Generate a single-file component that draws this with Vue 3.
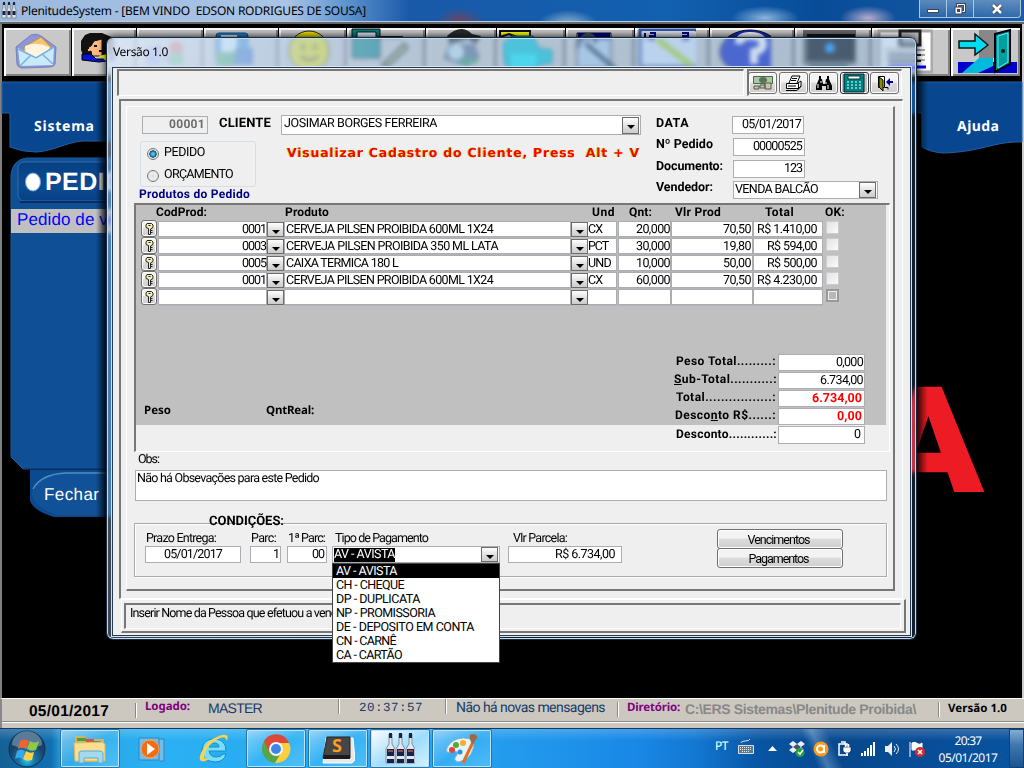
<script setup>
// Spreads the letters of a label so that it takes up the given width.
const vFit = {
  mounted(el, { value }) {
    const range = document.createRange()
    range.selectNodeContents(el)
    const width = range.getBoundingClientRect().width
    el.style.letterSpacing = (value - width) / el.textContent.length + 'px'
  }
}
const products = [
  ['0001', 'CERVEJA PILSEN PROIBIDA 600ML 1X24', 207, 'CX', 14, '20,000', '70,50', 'R$ 1.410,00', 60],
  ['0003', 'CERVEJA PILSEN PROIBIDA 350 ML LATA', 212, 'PCT', 20, '30,000', '19,80', 'R$ 594,00', 50],
  ['0005', 'CAIXA TERMICA 180 L', 112, 'UND', 23, '10,000', '50,00', 'R$ 500,00', 50],
  ['0001', 'CERVEJA PILSEN PROIBIDA 600ML 1X24', 207, 'CX', 14, '60,000', '70,50', 'R$ 4.230,00', 60],
  ['', '', 0, '', 0, '', '', '', 0]
]
const options = [
  ['AV - AVISTA', 61], ['CH - CHEQUE', 68], ['DP - DUPLICATA', 84], ['NP - PROMISSORIA', 99],
  ['DE - DEPOSITO EM CONTA', 138], ['CN - CARNÊ', 60], ['CA - CARTÃO', 66]
]
const tools = [
  ['mail', 68], ['people', 65], ['chart', 67], ['save', 75], ['smile', 68], ['calc', 79], ['phone', 71],
  ['car', 69], ['pen', 69], ['calendar', 75], ['help', 85], ['screen', 77], ['doc', 79], ['exit', 70]
]
</script>

<template>
  <div class="desktop">
    <header class="titlebar">
      <svg class="appicon" width="16" height="20" viewBox="0 0 16 20"><g v-for="x in [0, 5, 10]" :key="x" :transform="`translate(${x} 0)`"><path d="M2 3h2v5l1 2v8H1v-8l1-2z" fill="#dce6ee" stroke="#555" stroke-width=".5"/><path d="M2 2h2v3H2zM1.500 11h3v4h-3z" fill="#17213f"/></g></svg>
      <span class="ui t12" v-fit="345">PlenitudeSystem - [BEM VINDO&nbsp; EDSON RODRIGUES DE SOUSA]</span>
      <div class="winbtns">
        <span><svg width="14" height="12"><rect x="1.500" y="6.500" width="11" height="3" fill="#fff" stroke="#445"/></svg></span>
        <span><svg width="14" height="12"><path d="M4.500 1.500h7v7h-7z" fill="none" stroke="#445" stroke-width="3"/><path d="M4.500 1.500h7v7h-7z" fill="none" stroke="#fff"/><path d="M2 4h7v7H2z" fill="#fff" stroke="#445"/><rect x="4" y="6" width="3" height="3" fill="#445"/></svg></span>
        <span><svg width="14" height="12"><path d="M3 2l8 8M11 2l-8 8" stroke="#445" stroke-width="4.500"/><path d="M3 2l8 8M11 2l-8 8" stroke="#fff" stroke-width="2.600"/></svg></span>
      </div>
    </header>

    <main class="workspace">
      <nav class="tools">
        <div v-for="[name, w] in tools" :key="name" class="tool" :style="{ width: w + 'px' }">
          <svg width="64" height="48" viewBox="0 0 64 48">
            <g v-if="name === 'mail'"><path d="M12 19L27 7q6-2 10 1l15 11-1 17q-1 3-5 3l-28 1q-5-1-5-4z" fill="#8b97d6" stroke="#7580be"/><path d="M20 19l17-10 10 10 1 12H20z" fill="#f4c472" stroke="#c68b42"/><path d="M21 18q12-5 24 1l2 10H22z" fill="#fff5de"/><path d="M14 20l18 9 18-10-1 18-33 1z" fill="#c7ebfa"/><path d="M14 21l18 9 18-11M16 38l11-11M49 36L38 26" fill="none" stroke="#7daee0" stroke-width="1.500"/></g>
            <g v-else-if="name === 'people'"><path d="M14 27l-2-5V13l4-6 5-2h12l12 5v17z" fill="#111"/><path d="M25 13l8-2v17H23l-1-5-3 1-1-4 4-2z" fill="#ffb982" stroke="#111"/><path d="M13 26h9l5 5h13l5-6v7l-15 2-17-2z" fill="#0712d2" stroke="#000"/><path d="M29 28l5 2 5 5v-9z" fill="#ff0"/><path d="M25 18h3m2 5h3M15 20h5" stroke="#111" stroke-width="2"/></g>
            <g v-else-if="name === 'chart'"><rect x="12" y="18" width="14" height="20" fill="#8b9de0"/><circle cx="42" cy="20" r="7" fill="#df543f"/><rect x="35" y="25" width="14" height="12" fill="#4bb367"/><path d="M16 34l9-16 10 16" fill="none" stroke="#8b86db" stroke-width="3"/></g>
            <g v-else-if="name === 'save'"><rect x="15" y="5" width="32" height="30" rx="3" fill="#1d83d4" stroke="#1c497d"/><path d="M20 7h16v17H20z" fill="#e1f6ff"/><path d="M15 24h19v14H15z" fill="#38a158"/><path d="M34 20h18v17H34z" fill="#2865be"/></g>
            <g v-else-if="name === 'smile'"><circle cx="33" cy="23" r="20" fill="#eee000" stroke="#222"/><path d="M27 16v6m12-6v6M25 28q8 8 17 0" stroke="#6f7400" stroke-width="3" fill="none"/></g>
            <g v-else-if="name === 'calc'"><path d="M8 1h28v29H8z" fill="#008080" stroke="#111"/><path d="M13 4h19v6H13z" fill="#def" stroke="#111"/><path d="M38 37L60 16l5 3-21 19zM34 9h25" fill="#b8c874" stroke="#17232d" stroke-width="2"/></g>
            <g v-else-if="name === 'phone'"><path d="M24 8Q38-5 49 6l9 2-5 8-8-5-18 5z" fill="#282b2e"/><path d="M26 16h26l5 14-13 9-24-8z" fill="#5a7595"/><circle cx="33" cy="24" r="8" fill="#c2e2f2"/><path d="M36 33h18" stroke="#32a365" stroke-width="5"/></g>
            <g v-else-if="name === 'car'"><path d="M6 3h30v6H23l-8-3-9 3z" fill="#ff0" stroke="#111" stroke-width="2"/><path d="M9 15l9-7h21l6 12 13 2v13l-12 2-4 5H14l-4-8z" fill="#00c9db" stroke="#078"/><path d="M17 26h25v14H17z" fill="#0ef"/></g>
            <g v-else-if="name === 'pen'"><path d="M14 5h34v35H14z" fill="#b5d2ed" stroke="#111"/><path d="M15 5h32v6H15z" fill="#00008c"/><path d="M23 13l27 23 6 6-5 1L22 18z" fill="#263c5b"/><path d="M14 20q4-12 10-13 7-1 9 8" fill="none" stroke="#456" stroke-width="4"/></g>
            <g v-else-if="name === 'calendar'"><path d="M8 2h58v37H8z" fill="#dceafe" stroke="#3159b2" stroke-width="3"/><path d="M10 3h53v8H10z" fill="#dce1e9"/><path d="M13 5v6m5-6h5v3h-5v3h5M50 5h6v6h-6m0-3h6" fill="none" stroke="#00008b" stroke-width="2"/><path d="M26 12l34 26" stroke="#b6d93a" stroke-width="6"/></g>
            <g v-else-if="name === 'help'"><ellipse cx="43" cy="24" rx="30" ry="22" fill="#1428c8" stroke="#111"/><path d="M32 16q0-8 11-8 13 0 13 8 0 6-9 8v5M43 32h8" fill="none" stroke="#fff" stroke-width="8"/></g>
            <g v-else-if="name === 'screen'"><path d="M13 4h52v31H13z" fill="#15171b" stroke="#666" stroke-width="4"/><circle cx="38" cy="20" r="5" fill="#1395ff"/><path d="M17 39h39" stroke="#456" stroke-width="4"/></g>
            <g v-else-if="name === 'doc'"><path d="M10 3h53v41H10z" fill="#fff" stroke="#aaa" stroke-width="3"/><path d="M31 3h20v14H31z" fill="#bbb" stroke="#222" stroke-width="3"/><path d="M16 22h40M16 27h40M16 32h40" stroke="#aaa" stroke-width="2"/><path d="M20 27h32m-32 6h32" stroke="#222" stroke-width="2"/><path d="M19 39h38" stroke="#00f" stroke-width="3"/></g>
            <g v-else><path d="M26 2h18v28H26z" fill="#888"/><path d="M5 34h59v11H5z" fill="#00c"/><path d="M26 30h14v8L25 45H9z" fill="#0bd"/><path d="M42 6l15-4v34l-15 8z" fill="#008b8b" stroke="#001" stroke-width="2"/><path d="M45 8l10-3v29l-10 6z" fill="#009f9f" stroke="#6ef"/><path d="M6 13h16V6l13 11-13 10v-7H6z" fill="#00dcf0" stroke="#111" stroke-width="1.500"/><circle cx="50" cy="23" r="2" fill="#022"/></g>
          </svg>
        </div>
      </nav>
      <svg class="backdrop" width="1024" height="620" viewBox="0 78 1024 620">
        <defs><linearGradient id="b" x2="0" y2="1"><stop stop-color="#063f83"/><stop offset=".6" stop-color="#0d4b91"/><stop offset="1" stop-color="#064087"/></linearGradient>
          <linearGradient id="sh"><stop stop-color="#000" stop-opacity="0"/><stop offset="1" stop-color="#000" stop-opacity=".65"/></linearGradient></defs>
        <path d="M2 82H140V141H82C64 143 54 151 36 152Q22 152 10 147V113H2zM880 82H1022V142C994 141 982 152 943 153Q930 152 922 147V113H880z" fill="#08478f" stroke="#245e9f"/>
        <text x="34" y="131" textLength="60" class="tahoma">Sistema</text><text x="957" y="131" textLength="42" class="tahoma">Ajuda</text>
        <path d="M11 174Q13 160 26 158H150V469H23L11 457z" fill="#0e4f96" stroke="#1e5b9c"/>
        <rect x="18" y="162" width="140" height="39" rx="6" fill="url(#b)" stroke="#326ca9"/><path d="M20 202h120" stroke="#062e62" stroke-width="2"/>
        <ellipse cx="33" cy="182" rx="7.500" ry="9" fill="#fff" stroke="#6fa3d8"/><text x="45" y="190" textLength="98" font-family="Liberation Sans,sans-serif" font-weight="bold" font-size="25" fill="#fff">PEDIDO</text>
        <path d="M11 209h130v24H11z" fill="#c0c0c0"/><text x="17" y="225" textLength="129" font-family="Liberation Sans,sans-serif" font-size="17" fill="#00f">Pedido de venda</text>
        <path d="M30 470H150v47H54Q34 511 30 501z" fill="#0b4a91"/><path d="M31 493Q36 473 66 473H150v43H58Q32 508 31 493z" fill="#115197" stroke="#164476"/><path d="M33 489Q41 474 66 473H106" fill="none" stroke="#4d91c5" stroke-width="1.500"/>
        <path d="M23 469H106" stroke="#052d60"/><text x="44" y="500" textLength="55" font-family="Liberation Sans,sans-serif" font-size="17" fill="#fff">Fechar</text>
        <text x="873" y="491.500" textLength="111" lengthAdjust="spacingAndGlyphs" font-family="Roboto,sans-serif" font-weight="900" font-size="148" fill="#ed1c24">A</text>
        <rect x="96" y="82" width="10" height="553" fill="url(#sh)"/><rect x="916" y="80" width="12" height="560" fill="url(#sh)" transform="rotate(180 922 360)"/>
      </svg>
    </main>

    <footer class="status">
      <b class="date" v-fit="80">05/01/2017</b><i class="sep"></i><b class="purple" v-fit="45">Logado:</b>
      <span class="navy master" v-fit="54">MASTER</span><i class="sep s2"></i><span class="clock" v-fit="64">20:37:57</span><i class="sep s3"></i>
      <span class="navy msg" v-fit="149">Não há novas mensagens</span><i class="sep s4"></i><b class="purple dir" v-fit="53">Diretório:</b>
      <span class="path" v-fit="231">C:\ERS Sistemas\Plenitude Proibida\</span><i class="sep s5"></i><b class="ver" v-fit="59">Versão 1.0</b>
    </footer>

    <footer class="taskbar">
      <div class="start"><svg width="40" height="40" viewBox="0 0 40 40"><defs><radialGradient id="orb" cy=".8"><stop stop-color="#24d4f7"/><stop offset=".45" stop-color="#1772a7"/><stop offset="1" stop-color="#174365"/></radialGradient></defs><circle cx="20" cy="20" r="18" fill="url(#orb)" stroke="#12314e"/><path d="M5 16a15 14 0 0130 0q-15 7-30 0" fill="#d2e7f5" opacity=".35"/><path d="M13 12q5-3 9 0l-3 8q-4-3-8 0z" fill="#ef642c"/><path d="M23 12q4 3 9 0l-3 9q-5 2-9-1z" fill="#91c848"/><path d="M10 22q4-3 8 0l-2 8q-4-3-8 0z" fill="#35a7ea"/><path d="M19 22q4 3 8 1l-2 8q-5 2-9-1z" fill="#ffd246"/></svg></div>
      <div class="task open"><svg width="36" height="32" viewBox="0 0 36 32"><path d="M3 3h10l2 3h17v23H3z" fill="#d6b35b"/><path d="M5 5h9v3H5z" fill="#38a648"/><path d="M14 6h8v3h-8z" fill="#db5237"/><path d="M21 8h8v3h-8z" fill="#2f78ce"/><path d="M2 10l28-1 3 2v17H3z" fill="#f6df93" stroke="#d8b964"/><path d="M7 30V20q0-2 3-2h17q4 0 4 2v10h-5v-5H12v5z" fill="#a4d9ee" stroke="#5baed1"/></svg></div>
      <div class="task"><svg width="30" height="28" viewBox="0 0 30 28"><path d="M2 3h20v22H2zM22 4h5v22h-5" fill="#72bce9" stroke="#3684bd"/><circle cx="13" cy="14" r="9" fill="#f36b13" stroke="#ffa34d"/><path d="M10 8l8 6-8 6z" fill="#fff"/></svg></div>
      <div class="task"><svg width="36" height="34" viewBox="0 0 36 34"><path d="M30 19H13q1 6 7 6 5 0 7-3h3q-2 8-11 8Q6 29 6 18 7 7 18 7q12 0 12 12zM13 15h10q0-4-5-4t-5 4" fill="#7bddf7" stroke="#168dc7" fill-rule="evenodd"/><path d="M31 9Q34 0 23 4 11 8 5 21 1 31 9 29q3-1 5-3-6 2-6-2 0-5 7-12 14-12 16-3z" fill="#ffd34d"/></svg></div>
      <div class="task open w"><svg width="32" height="32" viewBox="0 0 32 32"><circle cx="16" cy="16" r="14" fill="#57a546"/><path d="M4 8A14 14 0 0129 10H16L10 20z" fill="#dc4938"/><path d="M29 10A14 14 0 0115 30l7-12q2-4-3-8z" fill="#fdcf3d"/><circle cx="16" cy="16" r="7" fill="#f3f6fa"/><circle cx="16" cy="16" r="5" fill="#4085e7"/></svg></div>
      <div class="task open"><svg width="34" height="32" viewBox="0 0 34 32"><path d="M5 5h27l2 22-3 3H2z" fill="#e8e8e6" stroke="#fff"/><path d="M6 4h23v21H2z" fill="#464646" stroke="#242424"/><path d="M3 22h26v4H2z" fill="#1b1b1b"/><text x="11" y="19" font-family="Open Sans,sans-serif" font-weight="700" font-size="18" fill="#ff9a22">S</text></svg></div>
      <div class="task open lit"><svg width="30" height="32" viewBox="0 0 30 32"><g v-for="x in [0, 10, 20]" :key="x" :transform="`translate(${x} 0)`"><path d="M4 1h3v10l3 5v14H1V16l3-5z" fill="#e1e8ee" stroke="#8090a0"/><path d="M4 0h3v5H4zM2 16h7v7H2zM2 26h7v4H2z" fill="#15224b"/><path d="M3 18h5" stroke="#fa7c6c"/></g></svg></div>
      <div class="task open"><svg width="36" height="34" viewBox="0 0 36 34"><path d="M14 30Q8 28 13 23q2-5-5-3Q1 22 3 16 7 7 19 6q14 0 10 11Q26 28 14 30z" fill="#e5f4fa" stroke="#8fb5c6"/><circle cx="8" cy="18" r="3" fill="#e44635"/><circle cx="12" cy="13" r="3" fill="#58a53c"/><circle cx="19" cy="11" r="3" fill="#f8ad28"/><circle cx="16" cy="20" r="2.500" fill="#2793dc"/><path d="M19 31l10-21" stroke="#de7222" stroke-width="3"/><path d="M27 10q-3-8 1-8 6 0 5 4l-4 6z" fill="#9b6b41"/></svg></div>
      <div class="tray">
        <span class="pt" v-fit="13">PT</span>
        <svg class="kb" width="16" height="15" viewBox="0 0 16 15"><path d="M.5 6.500h15v8H.5z" fill="#5d7891" stroke="#ddd"/><path d="M3 4q0-2 4-2t5-2" fill="none" stroke="#ddd"/><path d="M2 8.500h12M2 10.500h12M4 12.500h8" stroke="#eee" stroke-dasharray="1 1"/></svg>
        <svg class="up" width="9" height="5"><path d="M0 5L4.500 0 9 5z" fill="#fff"/></svg>
        <svg class="ic" width="16" height="16" viewBox="0 0 16 16"><path d="M0 3l4-3 4 3 4-3 4 3-4 3 3 3-4 3-3-3-4 3-4-3 4-3z" fill="#eef"/><path d="M4 6l4-3 4 3-4 3z" fill="#456"/><circle cx="11" cy="11.500" r="4.500" fill="#23a239"/><path d="M9 11l2 2 3-4" fill="none" stroke="#fff" stroke-width="1.500"/></svg>
        <svg class="ic" width="16" height="16" viewBox="0 0 16 16"><circle cx="8" cy="8" r="7.500" fill="#ff9b14"/><circle cx="7.500" cy="8" r="3.500" fill="none" stroke="#fff" stroke-width="2"/><path d="M11 4v8" stroke="#fff" stroke-width="2"/></svg>
        <svg class="ic" width="16" height="16" viewBox="0 0 16 16"><path d="M2 3h8v11H2zM4 1h4v2" fill="none" stroke="#fff" stroke-width="1.500"/><path d="M6 6h8v4l-2 2H8l-2-2z" fill="#fff" stroke="#124" stroke-width=".7"/><path d="M8.500 3v3m3-3v3M10 12v3" stroke="#fff" stroke-width="1.500"/></svg>
        <svg class="ic" width="16" height="14" viewBox="0 0 16 14"><path d="M0 11h2v3H0zM3 9h2v5H3zM6 6h2v8H6zM9 3h2v11H9zM12 0h2v14h-2z" fill="#fff"/></svg>
        <svg class="ic" width="16" height="14" viewBox="0 0 16 14"><path d="M0 4h3l4-4v14l-4-4H0z" fill="#eee"/><path d="M9 4q3 3 0 6m2-8q5 5 0 10" fill="none" stroke="#eee"/></svg>
        <svg class="ic" width="17" height="16" viewBox="0 0 17 16"><path d="M1 1v15M3 2q3-2 6 1 2 1 4-1v8q-4 2-6-1H3z" fill="#fff" stroke="#fff"/><circle cx="11" cy="11" r="5" fill="#d22c31"/><path d="M9 9l4 4m0-4l-4 4" stroke="#fff" stroke-width="1.500"/></svg>
        <div class="tclock"><span v-fit="27">20:37</span><span v-fit="59">05/01/2017</span></div>
        <div class="peek"></div>
      </div>
    </footer>

    <section class="dialog">
      <div class="caption"><span v-fit="55">Versão 1.0</span></div>
      <div class="client">
        <div class="bar">
          <div class="sunk blank"></div>
          <div class="sunk btns">
            <button><svg width="22" height="18"><path d="M1.500 2.500h19v7h-19z" fill="#afc5aa" stroke="#456b44"/><ellipse cx="11" cy="6" rx="4" ry="3" fill="#597559"/><path d="M13 9h6v6h-6zM2 12h5v3H2zM8 11h5v3H8z" fill="#c9c99f" stroke="#555"/></svg></button>
            <button><svg width="20" height="18"><path d="M6 9l3-7h8l-3 7M3.500 9.500h12v5h-12zM15 9l3-2v5l-3 3M9 4.500h5M8 6.500h5" fill="#fff" stroke="#000"/><path d="M5 12h8M3 16.500h11l4-4" fill="none" stroke="#000"/></svg></button>
            <button><svg width="20" height="18"><path d="M5 2h2v3h1l1 5h2l1-5h1V2h2v3l3 7v4h-6v-4H8v4H2v-4l3-7z" fill="#000"/><path d="M4 10v4m3-7v2M12 8v2m2 1v4" stroke="#fff"/></svg></button>
            <button class="calc"><svg width="22" height="20"><path d="M1 1h20v18H1z" fill="#008080" stroke="#023"/><path d="M5 3h12v3H5z" fill="#fff" stroke="#033"/><path d="M4 9h14M4 12h14M4 15h14" stroke="#9dd" stroke-width="1.500" stroke-dasharray="2 2"/></svg></button>
            <button><svg width="20" height="18"><path d="M3.500 2.500h6v11h-6z" fill="#fff" stroke="#000"/><path d="M4 3l4 3v11l-4-4z" fill="#8b8b00" stroke="#000"/><path d="M11 8l4-4v3h3v2h-3v3z" fill="#00009c"/><path d="M10 13.500h3v2" fill="none" stroke="#000"/></svg></button>
          </div>
        </div>
        <div class="outer">
          <div class="form">
            <div class="head">
              <div class="hleft">
                <div class="h1"><span class="box code"><b v-fit="36">00001</b></span><b class="cli" v-fit="52">CLIENTE</b><span class="box combo cbig"><span v-fit="153">JOSIMAR BORGES FERREIRA</span><i class="arrow"></i></span></div>
                <div class="h2"><div class="radios"><label><i class="radio on"></i><span v-fit="41">PEDIDO</span></label><label><i class="radio"></i><span v-fit="69">ORÇAMENTO</span></label></div><b class="red" v-fit="353">Visualizar Cadastro do Cliente, Press&nbsp; Alt + V</b></div>
                <b class="prod" v-fit="111">Produtos do Pedido</b>
              </div>
              <div class="hright">
                <b v-fit="33">DATA</b><span class="box r d1"><span v-fit="59">05/01/2017</span></span>
                <b v-fit="57">Nº Pedido</b><span class="box r"><span v-fit="49">00000525</span></span>
                <b v-fit="67">Documento:</b><span class="box r"><span v-fit="18">123</span></span>
                <b v-fit="57">Vendedor:</b><span class="box combo vend"><span v-fit="83">VENDA BALCÃO</span><i class="arrow"></i></span>
              </div>
            </div>
            <div class="panel">
              <div class="cols"><b v-fit="51">CodProd:</b><b v-fit="44">Produto</b><b v-fit="23">Und</b><b v-fit="23">Qnt:</b><b v-fit="46">Vlr Prod</b><b v-fit="29">Total</b><b v-fit="20">OK:</b></div>
              <div v-for="(p, i) in products" :key="i" class="prow">
                <button class="key"><svg width="9" height="12" viewBox="0 0 9 12"><path d="M2 .5h4.500l1.500 1.500v2.500l-2.500 1.500v5.500h-2V5.500L1 4.500V2z" fill="#f5f0b0" stroke="#222"/><path d="M3.500 2.500h2M6 7.500h1.500m-2 2h2" stroke="#222" fill="none"/></svg></button>
                <span class="cell r"><span v-if="p[0]" v-fit="24">{{ p[0] }}</span></span><i class="arrow"></i>
                <span class="cell"><span v-if="p[1]" v-fit="p[2]">{{ p[1] }}</span></span><i class="arrow"></i>
                <span class="cell und"><span v-if="p[3]" v-fit="p[4]">{{ p[3] }}</span></span>
                <span class="cell r q"><span v-if="p[5]" v-fit="34">{{ p[5] }}</span></span>
                <span class="cell r"><span v-if="p[6]" v-fit="28">{{ p[6] }}</span></span>
                <span class="cell r tot"><span v-if="p[7]" v-fit="p[8]">{{ p[7] }}</span></span>
                <i class="check" :class="{ last: i === 4 }"></i>
              </div>
              <div class="pfoot">
                <div class="weights"><b v-fit="27">Peso</b><b v-fit="48">QntReal:</b></div>
                <div class="totals">
                  <b v-fit="100">Peso Total.........:</b><span class="box r"><span v-fit="27">0,000</span></span>
                  <b class="sub" v-fit="103"><u>S</u>ub-Total...........:</b><span class="box r"><span v-fit="43">6.734,00</span></span>
                  <b v-fit="100">Total.................:</b><span class="box r"><b class="rd" v-fit="50">6.734,00</b></span>
                  <b class="sub2" v-fit="101">Desco<u>n</u>to R$......:</b><span class="box r"><b class="rd" v-fit="25">0,00</b></span>
                  <b class="low" v-fit="101">Desconto............:</b><span class="box r dz"><span v-fit="6">0</span></span>
                </div>
              </div>
            </div>
            <span class="obs" v-fit="21">Obs:</span>
            <div class="box memo"><span v-fit="182">Não há Obsevações para este Pedido</span></div>
            <b class="cond" v-fit="75">CONDIÇÕES:</b>
            <div class="terms">
              <div class="f1"><span v-fit="70">Prazo Entrega:</span><div class="box c"><span v-fit="58">05/01/2017</span></div></div>
              <div class="f2"><span v-fit="25">Parc:</span><div class="box r"><span v-fit="5">1</span></div></div>
              <div class="f3"><span v-fit="37">1ª Parc:</span><div class="box r"><span v-fit="12">00</span></div></div>
              <div class="f4"><span v-fit="93">Tipo de Pagamento</span><div class="box combo"><span class="sel" v-fit="61">AV - AVISTA</span><i class="arrow"></i></div></div>
              <div class="f5"><span v-fit="54">Vlr Parcela:</span><div class="box r"><span v-fit="60">R$ 6.734,00</span></div></div>
              <div class="acts"><button><span v-fit="62">Vencimentos</span></button><button><span v-fit="60">Pagamentos</span></button></div>
            </div>
          </div>
        </div>
        <div class="hint"><div><span v-fit="213">Inserir Nome da Pessoa que efetuou a venda</span></div></div>
      </div>
    </section>
    <ul class="menu"><li v-for="([o, w], i) in options" :key="o" :class="{ active: !i }"><span v-fit="w">{{ o }}</span></li></ul>
  </div>
</template>

<style>
body { overflow: hidden; background: #000; }
</style>
<style scoped>
* { box-sizing: border-box; }
.desktop { position: relative; width: 1024px; height: 768px; display: flex; flex-direction: column; font: 12.500px/14px Roboto, sans-serif; color: #000; white-space: pre; text-rendering: geometricPrecision; overflow: hidden; }
i { font-style: normal; }
svg { display: block; flex: none; }
span, b { flex: none; }
button { font: inherit; padding: 0; border: 1px solid #707070; display: flex; align-items: center; justify-content: center; background: linear-gradient(#f3f3f3 45%, #dcdcdc 50%, #cfcfcf); border-radius: 3px; box-shadow: inset 0 0 0 1px #fff; }
.titlebar { height: 24px; flex: none; display: flex; padding-left: 1px; background: radial-gradient(ellipse 34px 12px at 765px 18px, #8ab4dc, transparent), radial-gradient(ellipse 28px 12px at 868px 18px, #b6a9ca, transparent), radial-gradient(ellipse 24px 12px at 460px 20px, #674765, transparent), radial-gradient(ellipse 30px 14px at 568px 24px, #93b6cc, transparent), linear-gradient(90deg, #9cb9de, #a9c4e5 28%, #5c92ce 34%, #1959a8 40%, #1260b0 65%, #084c98 80%, #1b5ca4); border-bottom: 2px solid #666; box-shadow: inset 0 -1px #b6cce5; }
.ui { font-family: "Noto Sans", sans-serif; }
.t12 { font-size: 12px; line-height: 21px; margin-left: 4px; }
.winbtns { display: flex; margin-left: auto; margin-right: 3px; height: 18px; }
.winbtns span { width: 28px; border: 1px solid #aac6e5; border-top: 0; margin-left: -1px; background: linear-gradient(#ffffff50, #ffffff18); display: flex; justify-content: center; align-items: center; }
.winbtns span:last-child { width: 48px; border-radius: 0 0 4px; }
.workspace { height: 674px; flex: none; background: #000; border-left: 2px solid #808080; border-right: 2px solid #ccc; padding-top: 3px; }
.tools { display: flex; height: 51px; margin-left: 2px; overflow: hidden; }
.tool { flex: none; height: 50px; background: #c8c8c8; border: 1px solid #000; border-left: 0; box-shadow: inset 2px 2px #fff, inset -2px -2px #808080; overflow: hidden; }
.tool:not(:first-child) svg { margin-left: -3px; }
.tool:last-child svg { margin-left: 2px; }
.backdrop { margin-left: -2px; }
.tahoma { font: bold 14px "Noto Sans", sans-serif; fill: #fff; }

.status { height: 30px; flex: none; background: #ccc8c0; border-top: 1px solid #fff; border-left: 2px solid #888; box-shadow: inset 0 -5px #ccc8c0, inset 0 -6px #fff, inset 0 -7px #888; display: flex; padding-left: 27px; }
.date { font: bold 15.500px/25px "Liberation Sans", sans-serif; }
.sep { width: 2px; height: 15px; margin: 4px 8px 0 26px; background: linear-gradient(90deg, #888 1px, #fff 1px); }
.purple { font: bold 11.500px/15px "Noto Sans", sans-serif; color: #800080; }
.navy { color: #173b6a; font-size: 14px; line-height: 19px; }
.master { margin-left: 18px; font-family: "Liberation Sans", sans-serif; }
.s2 { margin: 0 0 0 76px; }
.clock { font: 12.500px/19px "Liberation Mono", monospace; color: #173b6a; margin-left: 19px; }
.s3 { margin: 0 0 0 22px; }
.msg { margin-left: 9px; }
.s4 { margin: 3px 0 0 12px; }
.dir { margin-left: 8px; line-height: 18px; }
.path { margin-left: 5px; font: bold 14px/21px "Liberation Sans", sans-serif; color: #888; }
.s5 { margin: 3px 0 0 22px; }
.ver { margin-left: 8px; font: bold 11.500px/19px "Noto Sans", sans-serif; }

.taskbar { height: 40px; flex: none; display: flex; background: linear-gradient(#ffffff30, transparent 30%), linear-gradient(65deg, transparent 78.500%, #81a9cc80 79.500%, transparent 81%), linear-gradient(90deg, #166196, #126fb1 5%, #299ddb 6%, #2ab1f3 15%, #27a2ef 45%, #1988e6 62%, #1378d2 68%, #0755a4 74%, #07488e 82%, #0853a0); border-top: 1px solid #153a62; }
.start { width: 60px; padding-left: 7px; }
.task { width: 60px; height: 39px; border: 1px solid transparent; margin-right: 2px; display: flex; align-items: center; justify-content: center; flex: none; }
.task.open { background: linear-gradient(145deg, #ffffff70, #4ac6ff50 50%, #78d7ff80); border-color: #2873a7; box-shadow: inset 0 0 0 1px #b8e5ff; border-radius: 2px; }
.task.lit { background: linear-gradient(145deg, #fff, #9edcff 55%, #d4f2ff); }
.tray { margin-left: auto; display: flex; align-items: center; color: #fff; font: 12px "Noto Sans", sans-serif; }
.pt { margin-bottom: 6px; }
.kb { margin: 0 14px 5px 10px; }
.up { margin-right: 12px; }
.ic { margin-right: 8px; }
.ic:nth-last-child(3) { margin-right: 6px; }
.tclock { display: flex; flex-direction: column; align-items: center; line-height: 17px; width: 64px; margin-left: 4px; margin-right: 9px; }
.peek { width: 15px; height: 39px; border: 1px solid #134173; background: linear-gradient(#86aed2, #3f77ae 40%, #1c5490); }

.dialog { position: absolute; left: 106px; top: 37px; width: 811px; height: 603px; border: 1px solid #182b40; border-radius: 7px; background: linear-gradient(120deg, #dce9f890, #8fbbe770 12%, #9dbddd60 30%, #4a8ac838 65%); backdrop-filter: blur(2px); box-shadow: inset 0 0 0 1px #c5dbee, 0 0 8px #000; padding: 0 5px 5px; display: flex; flex-direction: column; }
.caption { height: 28px; flex: none; font: 12px/26px "Noto Sans", sans-serif; margin: 1px -4px 0; padding-left: 5px; background: linear-gradient(90deg, #dfeafaa0, #a9c4df30 40%, #a9c4df50); border-radius: 6px 6px 0 0; }
.client { flex: 1; background: #efefef; border: 1px solid #253b50; box-shadow: 0 0 0 1px #d5e2ee; padding: 2px 4px 2px 3px; display: flex; flex-direction: column; }
.bar { display: flex; height: 27px; flex: none; gap: 3px; margin: -1px 0 1px 1px; }
.sunk { border: 2px solid #fff; border-width: 2px 1px 1px 2px; border-top-color: #777; border-left-color: #777; }
.blank { width: 627px; flex: none; }
.btns { display: flex; width: 155px; padding-top: 1px; }
.btns button { width: 29px; height: 22px; margin-left: 1.500px; }
.btns button:first-child { margin-left: -1px; }
.btns .calc { background: #c0c0c0; border-color: #333; }
.outer { height: 500px; flex: none; margin: 2px 3px 0 3px; border: 1px solid #fff; border-width: 2px 1px 1px 2px; border-top-color: #777; border-left-color: #777; padding: 5px 7px 0 5px; }
.form { height: 485px; border: 2px solid #777; border-width: 1px 2px 2px 1px; border-top-color: #fff; border-left-color: #fff; padding: 1px 0 0 1px; display: flex; flex-direction: column; }
.box { display: flex; background: #fff; border: 1px solid #abadb3; height: 18px; padding: 0 2px; line-height: 14px; align-items: center; }
.r { justify-content: flex-end; }
.head { height: 95px; display: flex; flex: none; }
.hleft { width: 527px; flex: none; padding: 7px 0 0 14px; }
.hleft b { font-size: 12px; }
.h1 { display: flex; align-items: flex-start; height: 26px; }
.code { width: 66px; background: #efefef; color: #6d6d6d; margin-top: 1px; padding-bottom: 2px; justify-content: flex-end; }
.cli { margin: 2px 10px 0 11px; }
.hleft .cli { font-size: 13px; }
.cbig { width: 360px; height: 20px; margin-top: 0; padding-bottom: 3px; }
.combo { padding-right: 1px; }
.arrow { width: 17px; height: 14px; flex: none; border: 1px solid #6b6b6b; background: linear-gradient(#fff, #ddd 60%, #ccc); display: flex; align-items: center; justify-content: center; }
.arrow::after { content: ""; border: 4px solid transparent; border-top-color: #000; border-bottom: 0; margin-top: 4px; }
.combo .arrow { margin-left: auto; height: 16px; }
.cbig .arrow { height: 17px; margin-bottom: -3px; }
.h2 { display: flex; height: 46px; margin-left: -2px; }
.radios { width: 116px; height: 46px; border: 1px solid #d5dfe5; border-radius: 3px; padding: 4px 0 0 6px; margin-right: 31px; flex: none; }
.radios label { display: flex; height: 22px; }
.radios label span { margin-left: 5px; }
.radio { width: 12px; height: 12px; border-radius: 50%; border: 1px solid #777; background: radial-gradient(#ddd, #fff); margin-top: 2px; box-shadow: inset 0 0 0 1px #ddd; }
.radio.on { background: radial-gradient(#45bff0 20%, #123f65 48%, #fff 58%); }
.hleft .red { font: bold 12.500px/16px "DejaVu Sans", sans-serif; color: #f00; text-shadow: -1px 0 #bfe800; margin-top: 4px; }
.hleft .prod { color: #000080; display: inline-block; margin: 0 0 0 -3px; }
.hright { display: grid; grid-template-columns: 77px 146px; grid-template-rows: 22px 22px 21px 20px; padding-top: 8px; margin-left: 1px; }
.hright b { padding-top: 1px; }
.hright b:nth-child(n+3) { padding-top: 0; }
.hright .box { width: 72px; padding: 0 2px 1px 1px; }
.hright .d1 { margin-left: -1px; }
.hright .vend { width: 145px; height: 18px; padding: 0 1px; }
.panel { margin: 0 3px 0 6px; height: 249px; flex: none; border: 2px solid #fff; border-width: 2px 1px 1px 2px; border-top-color: #777; border-left-color: #777; background: linear-gradient(90deg, transparent 750px, #efefef 0), linear-gradient(#c0c0c0 220px, #efefef 0); display: flex; flex-direction: column; }
.cols { display: grid; grid-template-columns: 129px 307px 37px 46px 90px 60px 30px; padding-left: 20px; height: 16px; font-size: 12px; flex: none; }
.prow { display: grid; grid-template-columns: 17px 109px 17px 287px 17px 30px 53px 82px 71px 14px; padding-left: 5px; height: 17px; flex: none; }
.cell { background: #fff; border: 1px solid #abadb3; box-shadow: 0 1px #b3b4b8; height: 16px; display: flex; padding: 0 1px; line-height: 15px; }
.cell:nth-child(2) { padding-right: 0; }
.prow .arrow { height: 15px; margin-top: 1px; }
.key { width: 16px; height: 17px; margin-top: -1px; }
.und { border-left: 0; padding: 0; margin-right: 1px; }
.q { padding: 0; }
.tot { padding-right: 5px; margin-right: 1px; }
.check { margin: 0 0 0 2px; width: 13px; height: 13px; border: 1px solid #ccc; background: linear-gradient(135deg, #e2e2e2, #fbfbfb); }
.check.last { border: 2px solid #999; background: #b7b7b7; box-shadow: inset 0 0 0 1px #eee; }
.pfoot { display: flex; justify-content: space-between; padding: 48px 24px 0 8px; font-size: 12.500px; }
.weights { display: flex; gap: 95px; padding-top: 49px; font: 11.500px/16px "Noto Sans", sans-serif; }
.totals { display: grid; grid-template-columns: 102px 87px; grid-auto-rows: 18px; }
.totals b { font-size: 12px; }
.totals .box { height: 17px; padding: 0 1px; }
.totals .sub { margin-left: -2px; }
.totals .sub2 { margin-left: -1px; }
.totals .rd { color: #f00; font-size: 12.500px; margin-right: 1px; }
.totals .low { padding-top: 1px; }
.totals .dz { padding-right: 4px; height: 18px; }
.obs { align-self: flex-start; margin-left: 10px; height: 18px; line-height: 15px; flex: none; }
.memo { height: 31px; margin: 0 6px 0 7px; padding: 1px 1px 0; align-items: flex-start; flex: none; }
.cond { align-self: flex-start; margin: 14px 0 -12px 81px; height: 15px; flex: none; z-index: 1; font-size: 13px; }
.terms { height: 54px; margin: 5px 6px 0 6px; border: 1px solid #aaa; box-shadow: inset 1px 1px #fff, 1px 1px #fff; display: flex; padding: 7px 0 0 10px; flex: none; }
.terms > div { display: flex; flex-direction: column; flex: none; margin-right: 9px; line-height: 15px; }
.terms > div > span { align-self: flex-start; margin-left: 1px; }
.terms .box { margin-top: 0; height: 17px; }
.terms .combo { padding-left: 1px; }
.terms .combo .arrow { height: 15px; }
.terms .f1 { width: 96px; } .terms .f2 { width: 31px; margin-right: 6px; } .terms .f3 { width: 40px; margin-right: 5px; } .terms .f4 { width: 168px; margin-right: 8px; } .terms .f5 { width: 114px; }
.terms .f4 > span { margin-left: 3px; } .terms .f5 > span { margin-left: 5px; } .terms .f5 .box { padding-right: 6px; }
.c { justify-content: center; }
.sel { background: #000; color: #fff; }
.terms .acts { margin: -2px 0 0 86px; width: 126px; }
.acts button { height: 20px; margin-bottom: -1px; padding-right: 3px; }
.hint { margin: 0 0 0 5px; width: 785px; height: 34px; border: 2px solid #777; border-width: 1px 2px 2px 1px; border-top-color: #fff; border-left-color: #fff; padding: 3px 3px 3px 2px; }
.hint div { height: 26px; border: 2px solid #fff; border-width: 2px 1px 1px 2px; border-top-color: #777; border-left-color: #777; padding: 0 0 0 4px; line-height: 18px; }
.menu { position: absolute; left: 332px; top: 563px; width: 168px; height: 100px; margin: 0; padding: 0; list-style: none; border: 1px solid #444; background: #fff; }
.menu li { height: 14px; line-height: 15px; padding-left: 3px; }
.menu .active { background: #000; color: #fff; }
</style>
